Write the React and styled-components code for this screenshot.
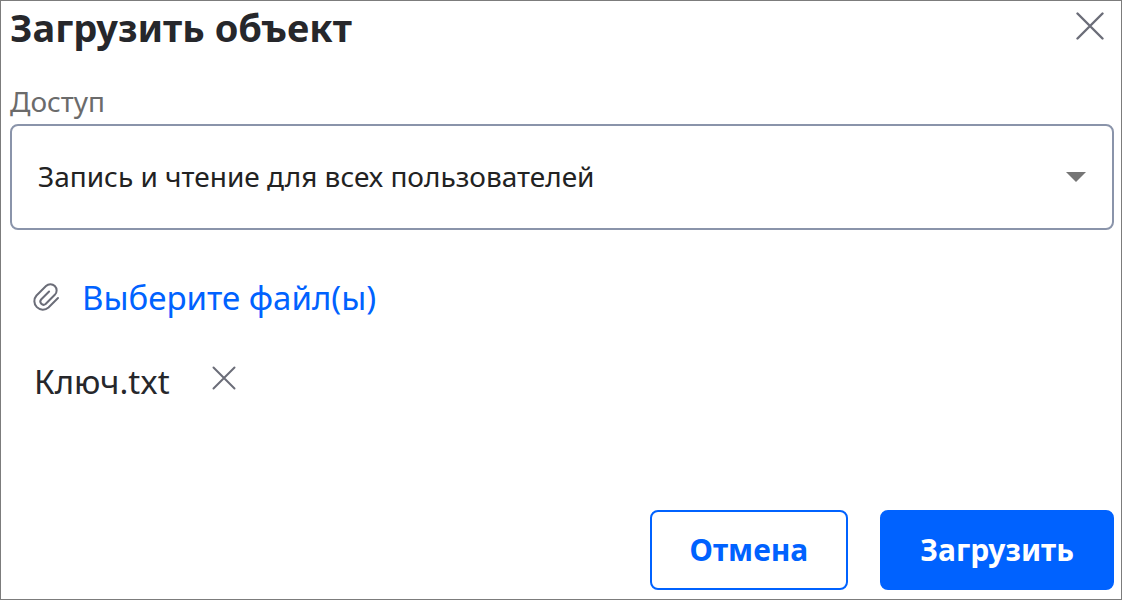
import React from 'react';
import styled, { createGlobalStyle } from 'styled-components';

const Global = createGlobalStyle`
  * { box-sizing: border-box; }
  body { margin: 0; background: #fff; font-family: "Noto Sans", sans-serif; color: #26272b; }
`;
const Dialog = styled.form`
  display: flex; flex-direction: column; min-height: 100vh;
  border: 1px solid #7c7c7c; padding: 5px 7px 9px 9px;
`;
const Header = styled.header`
  display: flex; justify-content: space-between; align-items: flex-start;
`;
const Title = styled.h1`
  margin: 0; font-size: 38px; line-height: 42px; font-weight: 700;
`;
const IconButton = styled.button`
  display: flex; padding: 0; border: 0; background: none; cursor: pointer; color: #6b6d78;
  margin: ${(p) => p.$margin || 0};
`;
const Label = styled.label`
  margin-top: 35px; font-size: 28px; line-height: 36px; color: #6b6b6b;
`;
const SelectBox = styled.div`
  display: grid; align-items: center; margin-top: 5px;
  & > * { grid-area: 1 / 1; }
`;
const Select = styled.select`
  appearance: none; width: 100%; height: 106px; padding: 0 60px 2px 26px;
  border: 2px solid #8a94aa; border-radius: 8px; background: #fff;
  font: 400 28px/36px "Noto Sans", sans-serif; color: #222;
`;
const Caret = styled.svg`
  justify-self: end; margin-right: 28px; pointer-events: none;
`;
const Picker = styled.div`
  display: flex; align-items: center; gap: 20px; margin: 46px 0 0 20px;
`;
const PickLink = styled.a`
  font-size: 33px; line-height: 44px; color: #0062ff; text-decoration: none;
`;
const FileRow = styled.div`
  display: flex; align-items: flex-start; margin: 40px 0 0 24px;
`;
const FileName = styled.span`
  font-size: 33px; line-height: 44px;
`;
const Footer = styled.footer`
  display: flex; justify-content: flex-end; gap: 32px; margin-top: auto;
`;
const Button = styled.button`
  height: 80px; padding: 0 38px; border: 2px solid #0062ff; border-radius: 8px;
  font: 700 30px/44px "Noto Sans", sans-serif; cursor: pointer;
  background: ${(p) => (p.$primary ? '#0062ff' : '#fff')};
  color: ${(p) => (p.$primary ? '#fff' : '#0062ff')};
`;

const Cross = ({ size, stroke }) => (
  <svg width={size} height={size} viewBox={`0 0 ${size} ${size}`} fill="none" stroke="currentColor" strokeWidth={stroke} strokeLinecap="round">
    <path d={`M1.5 1.5L${size - 1.5} ${size - 1.5}M${size - 1.5} 1.5L1.5 ${size - 1.5}`} />
  </svg>
);

export default function App() {
  return (
    <>
      <Global />
      <Dialog onSubmit={(e) => e.preventDefault()}>
        <Header>
          <Title>Загрузить объект</Title>
          <IconButton type="button" aria-label="Закрыть" $margin="6px 10px 0 0"><Cross size={28} stroke={2.4} /></IconButton>
        </Header>
        <Label htmlFor="access">Доступ</Label>
        <SelectBox>
          <Select id="access"><option>Запись и чтение для всех пользователей</option></Select>
          <Caret width="20" height="10" viewBox="0 0 20 10"><path d="M0 0H20L10 10Z" fill="#757575" /></Caret>
        </SelectBox>
        <Picker>
          <svg width="32" height="32" viewBox="0 0 32 32" fill="none" stroke="#6b6d78" strokeWidth="2" strokeLinecap="round" strokeLinejoin="round">
            <path d="M28 16L18.5 25.5a8.5 8.5 0 0 1-12-12L16 4a6.2 6.2 0 0 1 8.8 8.8L15.6 22a3.2 3.2 0 0 1-4.5-4.5l8-8" />
          </svg>
          <PickLink href="#files">Выберите файл(ы)</PickLink>
        </Picker>
        <FileRow>
          <FileName>Ключ.txt</FileName>
          <IconButton type="button" aria-label="Удалить файл" $margin="6px 0 0 42px"><Cross size={24} stroke={2} /></IconButton>
        </FileRow>
        <Footer>
          <Button type="button">Отмена</Button>
          <Button type="submit" $primary>Загрузить</Button>
        </Footer>
      </Dialog>
    </>
  );
}
